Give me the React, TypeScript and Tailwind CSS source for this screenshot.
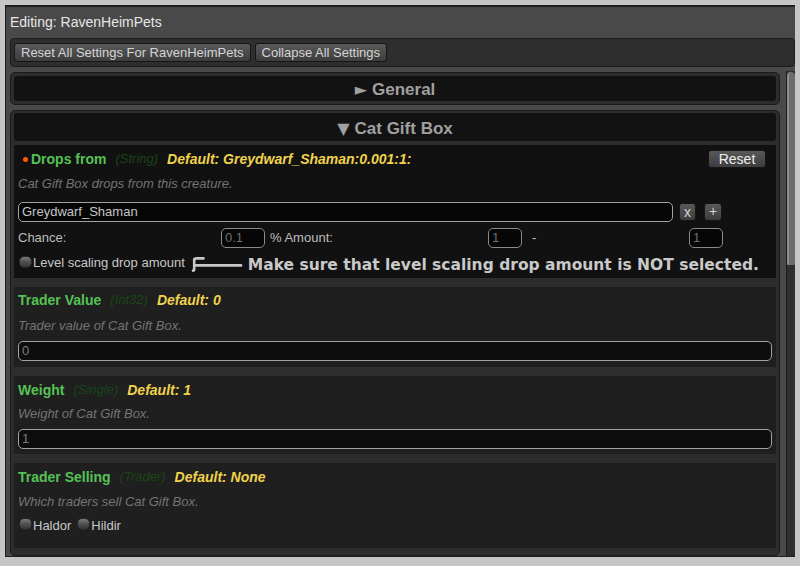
import React from "react";

type Kids = { children?: React.ReactNode; className?: string };

function Btn({ children, className = "" }: Kids) {
  return (
    <div
      className={`flex items-center justify-center rounded-[3px] border border-[#161616] bg-linear-to-b from-[#595959] to-[#3d3d3d] text-[#d4d4d4] leading-none ${className}`}
    >
      {children}
    </div>
  );
}

function Toggle() {
  return (
    <span className="inline-block w-[13px] h-[12px] rounded-[5px] border border-[#262626] bg-linear-to-b from-[#7c7c7c] via-[#4f4f4f] to-[#363636] shrink-0" />
  );
}

function SmallBox({ value, className = "" }: { value: string; className?: string }) {
  return (
    <div
      className={`h-[20px] rounded-[5px] border border-[#8a8a8a] bg-[#060606] flex items-center pl-[3px] text-[13px] text-[#6e6e6e] ${className}`}
    >
      {value}
    </div>
  );
}

function Title({
  name,
  kind,
  def,
  dot = false,
}: {
  name: string;
  kind: string;
  def: string;
  dot?: boolean;
}) {
  return (
    <div className="h-[20px] flex items-center">
      {dot && <span className="ml-[5px] mr-[3px] w-[5px] h-[5px] rounded-full bg-[#ff5a0a]" />}
      <span className="font-bold text-[14px] text-[#55c255]">{name}</span>
      <span className="ml-[9px] italic text-[13px] text-[#184618]">({kind})</span>
      <span className="ml-[9px] italic font-bold text-[14px] text-[#f0d24c]">Default: {def}</span>
    </div>
  );
}

function Desc({ children, className = "" }: Kids) {
  return (
    <div className={`h-[18px] flex items-center italic text-[13px] text-[#747474] ${className}`}>
      {children}
    </div>
  );
}

function WideInput({ value, className = "" }: { value: string; className?: string }) {
  return (
    <div
      className={`h-[20px] rounded-[5px] border border-[#a2a2a2] bg-[#0d0d0d] flex items-center pl-[3px] text-[13px] text-[#7c7c7c] ${className}`}
    >
      {value}
    </div>
  );
}

function Header({ arrow, label, className = "" }: { arrow: string; label: string; className?: string }) {
  return (
    <div
      className={`rounded-[3px] bg-[#121212] flex items-center justify-center font-bold text-[17px] text-[#a0a0a0] ${className}`}
    >
      <span className="text-[16px] mr-[5px] font-['DejaVu_Sans',sans-serif]">{arrow}</span>
      {label}
    </div>
  );
}

function HookArrow() {
  return (
    <svg width="52" height="16" viewBox="0 0 52 16" className="shrink-0">
      <g fill="none" stroke="#c8c8c8" strokeWidth="2.6" strokeLinecap="round" strokeLinejoin="round">
        <path d="M3.2 3.6 Q3.6 2.2 6 2.2 L12.5 2.4" />
        <path d="M3.2 3.6 L3.2 13.2 Q3.2 14.6 2 14.6" />
        <path d="M4.5 9.4 L50 9.4" />
      </g>
    </svg>
  );
}

export default function App() {
  return (
    <div className="w-[800px] h-[566px] bg-[#c6c6c6] pt-[5px] pl-[5px] font-['Liberation_Sans',Arial,sans-serif] overflow-hidden">
      <div className="w-[790px] h-[552px] bg-[#494949] border-t-2 border-l border-b border-[#1f1f1f] flex flex-col overflow-hidden">
        {/* window title */}
        <div className="h-[31px] shrink-0 flex items-center pl-[4px] text-[14px] text-[#e6e6e6]">
          Editing: RavenHeimPets
        </div>

        {/* toolbar */}
        <div className="ml-[4px] h-[29px] shrink-0 rounded-[4px] border border-[#1b1b1b] bg-[#2e2e2e] flex items-center gap-[4px] pl-[3px]">
          <Btn className="h-[19px] px-[6px] text-[13px]">Reset All Settings For RavenHeimPets</Btn>
          <Btn className="h-[19px] px-[6px] text-[13px]">Collapse All Settings</Btn>
        </div>

        {/* scroll view */}
        <div className="mt-[4px] flex-1 min-h-0 flex">
          <div className="w-[774px] pl-[4px] pt-[1px] flex flex-col gap-[5px] overflow-hidden">
            {/* collapsed section */}
            <div className="shrink-0 rounded-[5px] border border-[#1b1b1b] bg-[#2d2d2d] p-[3px]">
              <Header arrow="►" label="General" className="h-[25px] pt-[2px]" />
            </div>

            {/* expanded section */}
            <div className="shrink-0 rounded-[5px] border border-[#1b1b1b] bg-[#2d2d2d] pt-[2px] px-[3px] pb-[7px] flex flex-col">
              <Header arrow="▼" label="Cat Gift Box" className="h-[28px] pt-[3px]" />

              <div className="mt-[4px] flex flex-col gap-[9px]">
                {/* Drops from */}
                <div className="bg-[#111111] pl-[4px] pr-[4px] pt-[4px] pb-[7px] flex flex-col">
                  <div className="flex items-center justify-between">
                    <Title dot name="Drops from" kind="String" def="Greydwarf_Shaman:0.001:1:" />
                    <Btn className="mr-[6px] w-[58px] h-[18px] text-[14px] text-[#eeeeee]">Reset</Btn>
                  </div>
                  <Desc className="mt-[6px]">Cat Gift Box drops from this creature.</Desc>
                  <div className="mt-[9px] flex items-center">
                    <div className="w-[655px] h-[20px] rounded-[5px] border border-[#a2a2a2] bg-[#050505] flex items-center pl-[3px] text-[13px] text-[#c6c6c6]">
                      Greydwarf_Shaman
                    </div>
                    <Btn className="ml-[6px] w-[17px] h-[18px] text-[14px] text-[#c8c8c8] pb-[1px]">x</Btn>
                    <Btn className="ml-[8px] w-[18px] h-[18px] text-[14px] text-[#c8c8c8] pb-[2px]">+</Btn>
                  </div>
                  <div className="mt-[6px] h-[19px] flex items-center text-[13px] text-[#bdbdbd]">
                    <span className="w-[203px]">Chance:</span>
                    <SmallBox value="0.1" className="w-[44px] h-[19px]" />
                    <span className="ml-[5px] w-[218px]">% Amount:</span>
                    <SmallBox value="1" className="w-[34px] h-[19px]" />
                    <span className="w-[167px] pl-[10px]">-</span>
                    <SmallBox value="1" className="w-[34px] h-[19px]" />
                  </div>
                  <div className="mt-[8px] h-[16px] flex items-center">
                    <span className="ml-[1px]">
                      <Toggle />
                    </span>
                    <span className="text-[13px] text-[#c8c8c8] ml-[1px]">Level scaling drop amount</span>
                    <span className="ml-[6px] mt-[1px] flex">
                      <HookArrow />
                    </span>
                    <span className="ml-[5px] mt-[5px] font-bold text-[15.5px] text-[#c9c9c9] whitespace-nowrap font-['DejaVu_Sans',sans-serif]">
                      Make sure that level scaling drop amount is NOT selected.
                    </span>
                  </div>
                </div>

                {/* Trader Value */}
                <div className="bg-[#1f1f1f] px-[4px] pt-[3px] pb-[6px] flex flex-col">
                  <Title name="Trader Value" kind="Int32" def="0" />
                  <Desc className="mt-[7px]">Trader value of Cat Gift Box.</Desc>
                  <WideInput value="0" className="mt-[6px]" />
                </div>

                {/* Weight */}
                <div className="bg-[#1f1f1f] px-[4px] pt-[4px] pb-[5px] flex flex-col">
                  <Title name="Weight" kind="Single" def="1" />
                  <Desc className="mt-[5px]">Weight of Cat Gift Box.</Desc>
                  <WideInput value="1" className="mt-[6px]" />
                </div>

                {/* Trader Selling */}
                <div className="bg-[#1f1f1f] px-[4px] pt-[4px] pb-[13px] flex flex-col">
                  <Title name="Trader Selling" kind="Trader" def="None" />
                  <Desc className="mt-[6px]">Which traders sell Cat Gift Box.</Desc>
                  <div className="mt-[6px] h-[18px] flex items-center text-[13px] text-[#c8c8c8]">
                    <span className="ml-[1px]">
                      <Toggle />
                    </span>
                    <span className="ml-[1px]">Haldor</span>
                    <span className="ml-[6px]">
                      <Toggle />
                    </span>
                    <span className="ml-[1px]">Hildir</span>
                  </div>
                </div>
              </div>
            </div>
          </div>

          {/* scrollbar */}
          <div className="ml-[6px] w-[9px] flex flex-col bg-[#2f2f2f] border-l border-[#1c1c1c]">
            <div className="mt-[1px] h-[193px] rounded-t-[5px] rounded-b-[2px] bg-[#6c6c6c] border-l-2 border-[#8e8e8e]" />
          </div>
        </div>
      </div>
    </div>
  );
}
